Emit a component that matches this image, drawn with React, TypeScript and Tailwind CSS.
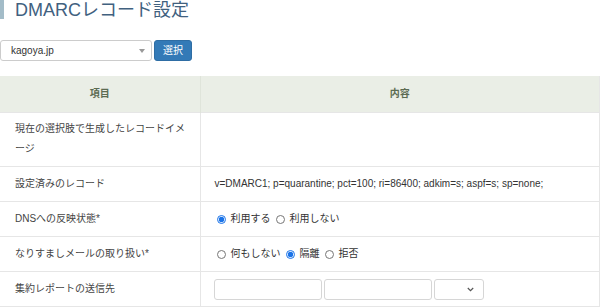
import { useState } from 'react';

const FONT = "font-['Liberation_Sans','Noto_Sans_CJK_JP',sans-serif]";

type Row = { label: React.ReactNode; content: React.ReactNode; tall?: boolean };

function Radio({
  name,
  label,
  value,
  current,
  onPick
}: {
  name: string;
  label: string;
  value: string;
  current: string;
  onPick: (v: string) => void;
}) {
  return (
    <label className="inline-flex items-center mr-[3px]">
      <input
        type="radio"
        name={name}
        checked={current === value}
        onChange={() => onPick(value)}
        className="w-[9px] h-[9px] m-0 ml-[2px] mr-[5px] accent-[#1a73e8]"
      />
      <span>{label}</span>
    </label>
  );
}

export default function App() {
  const [dns, setDns] = useState('on');
  const [policy, setPolicy] = useState('quarantine');

  const rows: Row[] = [
    {
      label: (
        <>
          現在の選択肢で生成したレコードイメ
          <br />
          ージ
        </>
      ),
      content: null,
      tall: true
    },
    {
      label: '設定済みのレコード',
      content: 'v=DMARC1; p=quarantine; pct=100; ri=86400; adkim=s; aspf=s; sp=none;'
    },
    {
      label: 'DNSへの反映状態*',
      content: (
        <div className="flex items-center">
          <Radio name="dns" label="利用する" value="on" current={dns} onPick={setDns} />
          <Radio name="dns" label="利用しない" value="off" current={dns} onPick={setDns} />
        </div>
      )
    },
    {
      label: 'なりすましメールの取り扱い*',
      content: (
        <div className="flex items-center">
          <Radio name="p" label="何もしない" value="none" current={policy} onPick={setPolicy} />
          <Radio name="p" label="隔離" value="quarantine" current={policy} onPick={setPolicy} />
          <Radio name="p" label="拒否" value="reject" current={policy} onPick={setPolicy} />
        </div>
      )
    },
    {
      label: '集約レポートの送信先',
      content: (
        <div className="flex items-center gap-[2px] -ml-[1px]">
          <input className="w-[108px] h-[21px] rounded-[3px] border border-[#d6d6d6] bg-white" />
          <input className="w-[108px] h-[21px] rounded-[3px] border border-[#d6d6d6] bg-white" />
          <div className="w-[50px] h-[21px] rounded-[3px] border border-[#d6d6d6] bg-white flex items-center justify-end pr-[9px]">
            <svg width="7" height="5" viewBox="0 0 7 5">
              <path d="M0.8 1 L3.5 3.7 L6.2 1" fill="none" stroke="#555" strokeWidth="1.2" />
            </svg>
          </div>
        </div>
      )
    }
  ];

  return (
    <div className={`${FONT} w-[600px] h-[308px] bg-white overflow-hidden text-[#444]`}>
      <h1 className="border-l-4 border-[#a3bcc8] pl-[11px] pt-px text-[18px] leading-[18px] text-[#41617f]">
        DMARCレコード設定
      </h1>

      <div className="flex items-center gap-[2px] mt-[21px]">
        <div className="w-[152px] h-[21px] rounded-[3px] border border-[#cccccc] bg-white flex items-center justify-between pl-[10px] pr-[6px] text-[10px] text-[#333]">
          <span>kagoya.jp</span>
          <span className="w-0 h-0 border-l-[3px] border-r-[3px] border-t-[4px] border-l-transparent border-r-transparent border-t-[#999]" />
        </div>
        <button
          type="button"
          className="w-[38px] h-[21px] rounded-[3px] bg-[#337ab7] border border-[#2e6da4] text-white text-[10px] leading-none"
        >
          選択
        </button>
      </div>

      <table className="mt-[15px] w-[600px] table-fixed border-collapse text-[10px] leading-5">
        <colgroup>
          <col className="w-[200px]" />
          <col />
        </colgroup>
        <thead>
          <tr className="bg-[#eaeee6] text-[#5c6b52]">
            <th className="h-[36px] py-2 font-semibold text-center border-r border-[#dfe4da]">項目</th>
            <th className="h-[36px] py-2 font-semibold text-center border-r border-[#e6e6e6]">内容</th>
          </tr>
        </thead>
        <tbody>
          {rows.map((r, i) => (
            <tr key={i} className="border-t border-[#e6e6e6]">
              <td
                className={`pl-[15px] pr-[5px] whitespace-nowrap align-middle border-r border-[#e6e6e6] ${
                  r.tall ? 'pt-[6px] pb-[7px]' : 'py-[7px]'
                }`}
              >
                {r.label}
              </td>
              <td className={`px-[14px] whitespace-nowrap align-middle border-r border-[#e6e6e6] text-[#333] ${i === 4 ? 'py-[6px]' : 'py-[7px]'}`}>
                {r.content}
              </td>
            </tr>
          ))}
          <tr className="border-t border-[#e6e6e6]">
            <td colSpan={2} className="h-[1px] p-0" />
          </tr>
        </tbody>
      </table>
    </div>
  );
}
